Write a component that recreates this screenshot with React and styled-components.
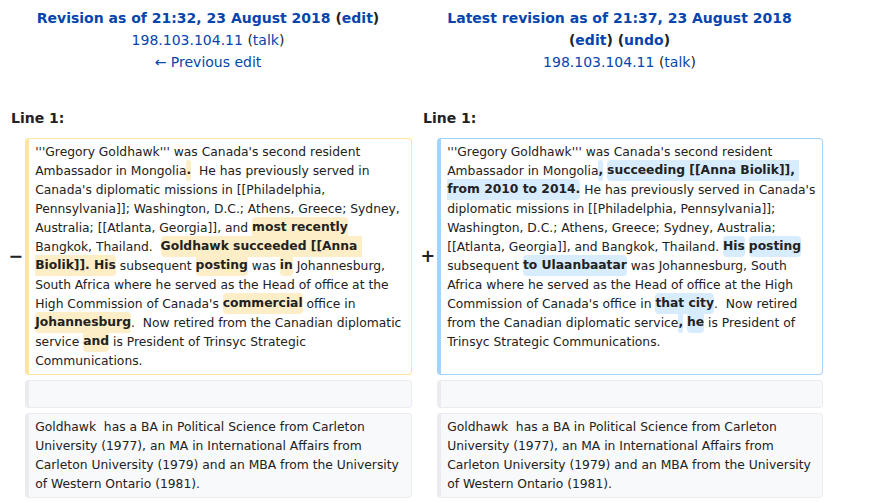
import styled, { createGlobalStyle } from "styled-components";

const GlobalStyle = createGlobalStyle`
  html, body {
    margin: 0;
    padding: 0;
    background: #fff;
  }
  body {
    font-family: "DejaVu Sans", "Noto Sans", sans-serif;
    font-size: 14px;
    color: #222;
  }
`;

const boxColors = {
  deleted: { border: "#ffe49c", bg: "#fff" },
  added: { border: "#a3d3ff", bg: "#fff" },
  context: { border: "#eaecf0", bg: "#f8f9fa" },
};

const DiffTable = styled.div`
  display: grid;
  grid-template-columns: 17px 387px 17px 386px;
  column-gap: 4px;
  row-gap: 5px;
  padding: 4px;
  width: max-content;
`;

const TitleCell = styled.div`
  grid-column: span 2;
  text-align: center;
  line-height: 22px;
  padding: 3px 7px 26px;
`;

const TitleLine = styled.div`
  white-space: nowrap;
  font-weight: ${(p) => (p.$bold ? "bold" : "normal")};
`;

const Link = styled.a`
  color: #0645ad;
  text-decoration: none;
  cursor: pointer;
`;

const LineNo = styled.div`
  grid-column: span 2;
  font-weight: bold;
  line-height: 20px;
  padding: 4px 7px 5px;
`;

const Marker = styled.div`
  align-self: center;
  font-size: 17.5px;
  font-weight: bold;
  line-height: 1.2;
  padding-left: 4.4px;
  white-space: nowrap;
  color: #222;
`;

const DiffCell = styled.div`
  font-size: 12.32px;
  line-height: 19px;
  white-space: pre-wrap;
  overflow-wrap: break-word;
  border-style: solid;
  border-width: 1px 1px 1px 4px;
  border-radius: 4px;
  padding: 3.5px 6.16px;
  border-color: ${(p) => boxColors[p.$kind].border};
  background: ${(p) => boxColors[p.$kind].bg};
`;

const Change = styled.span`
  font-weight: bold;
  border-radius: 4px;
  padding: 0.25em 0;
  background: ${(p) => (p.$added ? "#d8ecff" : "#feeec8")};
`;

const D = (t) => <Change>{t}</Change>;
const A = (t) => <Change $added>{t}</Change>;

const oldText = [
  "'''Gregory Goldhawk''' was Canada's second resident Ambassador in Mongolia",
  D("."),
  "  He has previously served in Canada's diplomatic missions in [[Philadelphia, Pennsylvania]]; Washington, D.C.; Athens, Greece; Sydney, Australia; [[Atlanta, Georgia]], and ",
  D("most recently"),
  " Bangkok, Thailand.  ",
  D("Goldhawk succeeded [[Anna Biolik]]. His"),
  " subsequent ",
  D("posting"),
  " was ",
  D("in"),
  " Johannesburg, South Africa where he served as the Head of office at the High Commission of Canada's ",
  D("commercial"),
  " office in ",
  D("Johannesburg"),
  ".  Now retired from the Canadian diplomatic service ",
  D("and"),
  " is President of Trinsyc Strategic Communications.",
];

const newText = [
  "'''Gregory Goldhawk''' was Canada's second resident Ambassador in Mongolia",
  A(","),
  " ",
  A("succeeding [[Anna Biolik]], from 2010 to 2014."),
  " He has previously served in Canada's diplomatic missions in [[Philadelphia, Pennsylvania]]; Washington, D.C.; Athens, Greece; Sydney, Australia; [[Atlanta, Georgia]], and Bangkok, Thailand. ",
  A("His"),
  " ",
  A("posting"),
  " subsequent ",
  A("to Ulaanbaatar"),
  " was Johannesburg, South Africa where he served as the Head of office at the High Commission of Canada's office in ",
  A("that city"),
  ".  Now retired from the Canadian diplomatic service",
  A(","),
  " ",
  A("he"),
  " is President of Trinsyc Strategic Communications.",
];

const contextText =
  "Goldhawk  has a BA in Political Science from Carleton University (1977), an MA in International Affairs from Carleton University (1979) and an MBA from the University of Western Ontario (1981).";

function Segments({ parts }) {
  return parts.map((part, id) => <span key={id}>{part}</span>);
}

export default function App() {
  return (
    <>
      <GlobalStyle />
      <DiffTable>
        <TitleCell>
          <TitleLine $bold>
            <Link>Revision as of 21:32, 23 August 2018</Link> (<Link>edit</Link>)
          </TitleLine>
          <TitleLine>
            <Link>198.103.104.11</Link> (<Link>talk</Link>)
          </TitleLine>
          <TitleLine>
            <Link>← Previous edit</Link>
          </TitleLine>
        </TitleCell>
        <TitleCell>
          <TitleLine $bold>
            <Link>Latest revision as of 21:37, 23 August 2018</Link>
          </TitleLine>
          <TitleLine $bold>
            (<Link>edit</Link>) (<Link>undo</Link>)
          </TitleLine>
          <TitleLine>
            <Link>198.103.104.11</Link> (<Link>talk</Link>)
          </TitleLine>
        </TitleCell>

        <LineNo>Line 1:</LineNo>
        <LineNo>Line 1:</LineNo>

        <Marker>−</Marker>
        <DiffCell $kind="deleted">
          <Segments parts={oldText} />
        </DiffCell>
        <Marker>+</Marker>
        <DiffCell $kind="added">
          <Segments parts={newText} />
        </DiffCell>

        <Marker />
        <DiffCell $kind="context">{"\u00a0"}</DiffCell>
        <Marker />
        <DiffCell $kind="context">{"\u00a0"}</DiffCell>

        <Marker />
        <DiffCell $kind="context">{contextText}</DiffCell>
        <Marker />
        <DiffCell $kind="context">{contextText}</DiffCell>
      </DiffTable>
    </>
  );
}
